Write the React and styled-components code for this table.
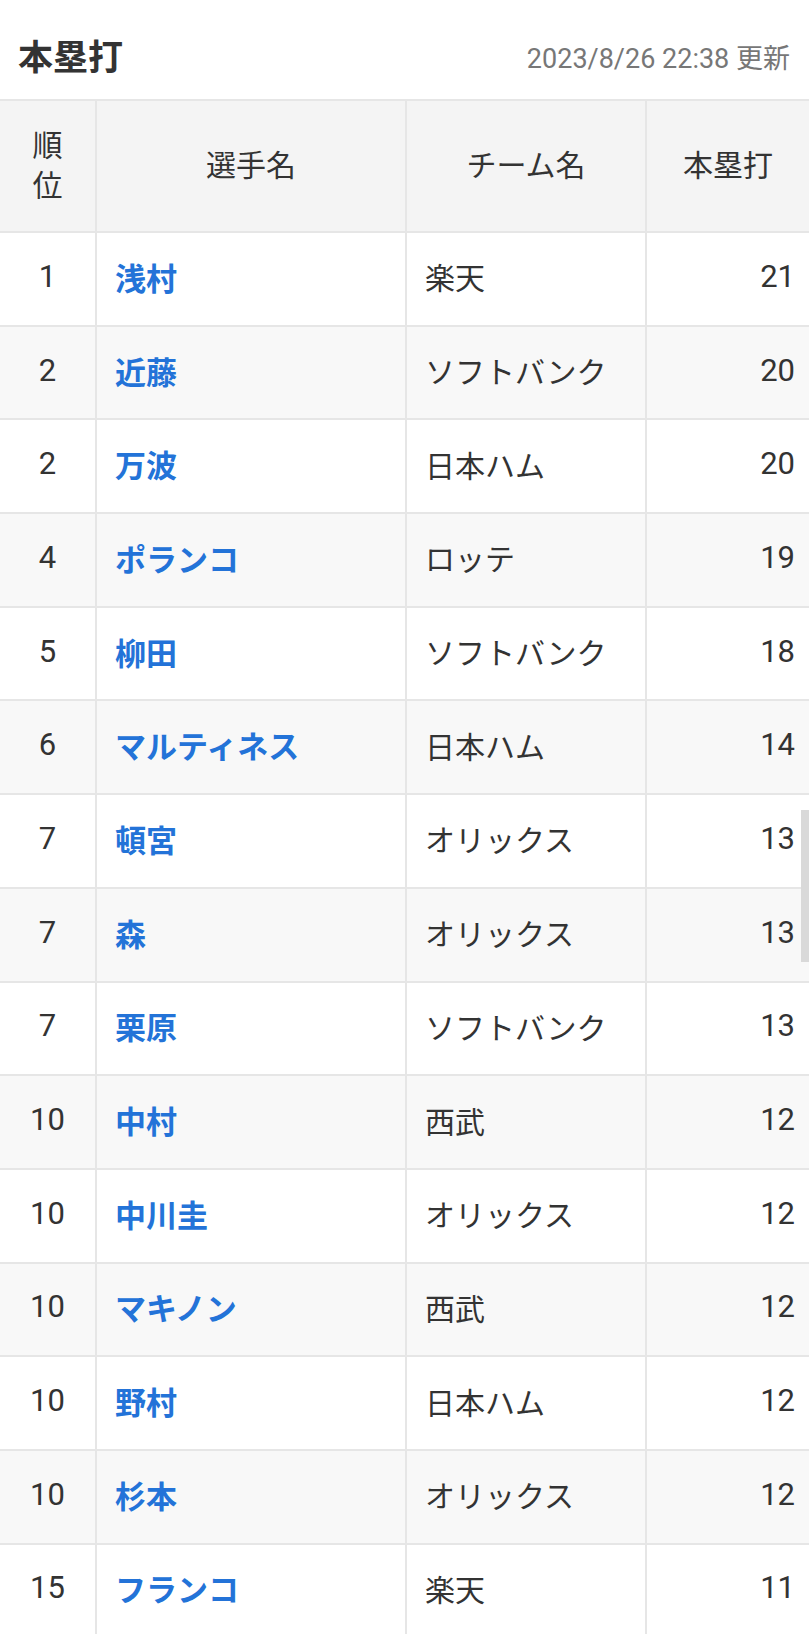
import styled, { createGlobalStyle } from 'styled-components'

const GlobalStyle = createGlobalStyle`
  html, body {
    margin: 0;
    padding: 0;
    background: #fff;
  }
  body {
    font-family: Roboto, "Noto Sans CJK JP", sans-serif;
    color: #333;
  }
`

const Page = styled.div`
  position: relative;
  width: 809px;
  height: 1634px;
  overflow: hidden;
  background: #fff;
`

const Header = styled.div`
  height: 99px;
  box-sizing: border-box;
  padding: 10px 19px 0 18px;
  display: flex;
  align-items: center;
  justify-content: space-between;
`

const Title = styled.h1`
  margin: 0;
  font-size: 35px;
  font-weight: 700;
  color: #333;
`

const Updated = styled.span`
  font-size: 27px;
  color: #777;
  padding-top: 4px;
`

const Table = styled.table`
  width: 100%;
  border-collapse: collapse;
  table-layout: fixed;
  border-top: 2px solid #e6e6e6;
`

const HeadRow = styled.tr`
  height: 132px;
  background: #f4f4f4;
`

const Th = styled.th`
  font-weight: 400;
  font-size: 30px;
  line-height: 40px;
  color: #333;
  text-align: center;
  border: 2px solid #e6e6e6;
  border-top: none;
  padding: 0 ${p => (p.$narrow ? '28px' : '8px')};
  &:first-child { border-left: none; }
  &:last-child { border-right: none; }
`

const Row = styled.tr`
  height: 93.7px;
  background: ${p => (p.$alt ? '#f8f8f8' : '#fff')};
`

const Td = styled.td`
  font-size: ${p => p.$size || 31}px;
  color: #333;
  border: 2px solid #e6e6e6;
  text-align: ${p => p.$align || 'left'};
  padding: ${p => p.$pad || '0 18px'};
  padding-bottom: 5px;
  white-space: nowrap;
  &:first-child { border-left: none; }
  &:last-child { border-right: none; }
`

const PlayerLink = styled.a`
  color: #2373d8;
  font-weight: 700;
  text-decoration: none;
`

const ScrollThumb = styled.div`
  position: absolute;
  right: 0;
  top: 810px;
  width: 8px;
  height: 152px;
  background: #d9d9d9;
`

const players = [
  { rank: 1, name: '浅村', team: '楽天', hr: 21 },
  { rank: 2, name: '近藤', team: 'ソフトバンク', hr: 20 },
  { rank: 2, name: '万波', team: '日本ハム', hr: 20 },
  { rank: 4, name: 'ポランコ', team: 'ロッテ', hr: 19 },
  { rank: 5, name: '柳田', team: 'ソフトバンク', hr: 18 },
  { rank: 6, name: 'マルティネス', team: '日本ハム', hr: 14 },
  { rank: 7, name: '頓宮', team: 'オリックス', hr: 13 },
  { rank: 7, name: '森', team: 'オリックス', hr: 13 },
  { rank: 7, name: '栗原', team: 'ソフトバンク', hr: 13 },
  { rank: 10, name: '中村', team: '西武', hr: 12 },
  { rank: 10, name: '中川圭', team: 'オリックス', hr: 12 },
  { rank: 10, name: 'マキノン', team: '西武', hr: 12 },
  { rank: 10, name: '野村', team: '日本ハム', hr: 12 },
  { rank: 10, name: '杉本', team: 'オリックス', hr: 12 },
  { rank: 15, name: 'フランコ', team: '楽天', hr: 11 },
]

export default function App() {
  return (
    <Page>
      <GlobalStyle />
      <Header>
        <Title>本塁打</Title>
        <Updated>2023/8/26 22:38 更新</Updated>
      </Header>
      <Table>
        <colgroup>
          <col style={{ width: 96 }} />
          <col style={{ width: 310 }} />
          <col style={{ width: 240 }} />
          <col style={{ width: 163 }} />
        </colgroup>
        <thead>
          <HeadRow>
            <Th $narrow>順位</Th>
            <Th>選手名</Th>
            <Th>チーム名</Th>
            <Th>本塁打</Th>
          </HeadRow>
        </thead>
        <tbody>
          {players.map((p, i) => (
            <Row key={p.name} $alt={i % 2 === 1}>
              <Td $align="center" $pad="0">{p.rank}</Td>
              <Td>
                <PlayerLink href="#">{p.name}</PlayerLink>
              </Td>
              <Td $size={30}>{p.team}</Td>
              <Td $align="right" $pad="0 14px 0 0">{p.hr}</Td>
            </Row>
          ))}
        </tbody>
      </Table>
      <ScrollThumb />
    </Page>
  )
}
